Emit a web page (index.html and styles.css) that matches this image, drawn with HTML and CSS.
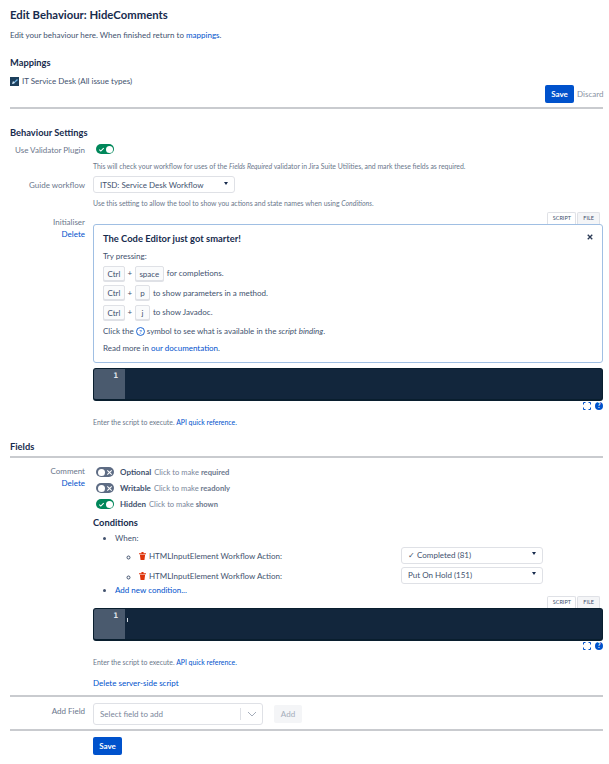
FILE: index.html
```html
<!DOCTYPE html>
<html lang="en">
<head>
<meta charset="utf-8">
<title>Edit Behaviour</title>
<link rel="stylesheet" href="styles.css">
</head>
<body>
<main class="page">
  <h1 class="title">Edit Behaviour: HideComments</h1>
  <p class="intro">Edit your behaviour here. When finished return to <a href="#">mappings</a>.</p>
  <h2 class="heading mappings-heading">Mappings</h2>
  <div class="mapping">
    <svg class="project-icon" viewBox="0 0 9 9" width="9" height="9"><rect width="9" height="9" fill="#1d3f5c"/><path d="M2 7 L7 2 L8 3 L4 6.5 Z" fill="#6fb3e8"/><path d="M2 7l1-3 2 2z" fill="#d7e9f7"/></svg>
    <span>IT Service Desk (All issue types)</span>
  </div>
  <div class="actions">
    <button class="btn-primary">Save</button>
    <span class="discard">Discard</span>
  </div>
  <hr class="rule">

  <h2 class="heading settings-heading">Behaviour Settings</h2>
  <div class="row row-validator">
    <div class="label">Use Validator Plugin</div>
    <div class="content">
      <span class="toggle on"><svg class="mark" viewBox="0 0 8 8" width="8" height="8"><path d="M1.5 4.2 3.2 5.8 6.5 2.4" fill="none" stroke="#fff" stroke-width="1.2"/></svg><i class="knob"></i></span>
      <p class="help help-validator">This will check your workflow for uses of the <em>Fields Required</em> validator in Jira Suite Utilities, and mark these fields as required.</p>
    </div>
  </div>
  <div class="row row-guide">
    <div class="label">Guide workflow</div>
    <div class="content">
      <div class="select select-guide"><span>ITSD: Service Desk Workflow</span><i class="caret"></i></div>
      <p class="help help-guide">Use this setting to allow the tool to show you actions and state names when using <em>Conditions</em>.</p>
    </div>
  </div>
  <div class="row row-init">
    <div class="label">Initialiser<a class="label-link" href="#">Delete</a></div>
    <div class="content">
      <div class="tabs"><span class="tab active">SCRIPT</span><span class="tab">FILE</span></div>
      <div class="notice">
        <svg class="close" viewBox="0 0 8 8" width="6" height="6"><path d="M1 1 7 7M7 1 1 7" stroke="#2b3a55" stroke-width="1.8"/></svg>
        <h3 class="notice-title">The Code Editor just got smarter!</h3>
        <p class="notice-line try">Try pressing:</p>
        <p class="keys"><kbd>Ctrl</kbd><b>+</b><kbd>space</kbd><span>for completions.</span></p>
        <p class="keys"><kbd>Ctrl</kbd><b>+</b><kbd>p</kbd><span>to show parameters in a method.</span></p>
        <p class="keys"><kbd>Ctrl</kbd><b>+</b><kbd>j</kbd><span>to show Javadoc.</span></p>
        <p class="notice-line click">Click the <svg class="qmark" viewBox="0 0 10 10" width="9" height="9"><circle cx="5" cy="5" r="4.4" fill="none" stroke="#0052cc" stroke-width="1"/><text x="5" y="7.6" text-anchor="middle" font-size="7" fill="#0052cc">?</text></svg> symbol to see what is available in the <em>script binding</em>.</p>
        <p class="notice-line more">Read more in <a href="#">our documentation</a>.</p>
      </div>
      <div class="editor"><div class="gutter">1</div><div class="code"></div></div>
      <div class="editor-tools">
        <svg viewBox="0 0 8 8" width="8" height="8"><path d="M.5 2.5v-2h2M5.5.5h2v2M7.5 5.5v2h-2M2.5 7.5h-2v-2" fill="none" stroke="#0052cc" stroke-width="1"/></svg>
        <svg viewBox="0 0 8 8" width="8" height="8"><circle cx="4" cy="4" r="4" fill="#0052cc"/><text x="4" y="6.4" text-anchor="middle" font-size="6.5" font-weight="700" fill="#fff">?</text></svg>
      </div>
      <p class="help help-script">Enter the script to execute. <a href="#">API quick reference.</a></p>
    </div>
  </div>

  <h2 class="heading fields-heading">Fields</h2>
  <hr class="rule rule-fields">
  <div class="row row-comment">
    <div class="label">Comment<a class="label-link" href="#">Delete</a></div>
    <div class="content">
      <div class="state"><span class="toggle off"><i class="knob"></i><svg class="mark" viewBox="0 0 8 8" width="8" height="8"><path d="M1.5 1.5 6.5 6.5M6.5 1.5 1.5 6.5" stroke="#fff" stroke-width="1.2"/></svg></span><strong>Optional</strong><span class="hint">Click to make <b>required</b></span></div>
      <div class="state"><span class="toggle off"><i class="knob"></i><svg class="mark" viewBox="0 0 8 8" width="8" height="8"><path d="M1.5 1.5 6.5 6.5M6.5 1.5 1.5 6.5" stroke="#fff" stroke-width="1.2"/></svg></span><strong>Writable</strong><span class="hint">Click to make <b>readonly</b></span></div>
      <div class="state"><span class="toggle on"><svg class="mark" viewBox="0 0 8 8" width="8" height="8"><path d="M1.5 4.2 3.2 5.8 6.5 2.4" fill="none" stroke="#fff" stroke-width="1.2"/></svg><i class="knob"></i></span><strong>Hidden</strong><span class="hint">Click to make <b>shown</b></span></div>
      <h3 class="conditions-heading">Conditions</h3>
      <ul class="conditions">
        <li class="when">When:
          <ul class="sub">
            <li class="cond">
              <div class="cond-row"><span class="cond-label"><svg class="trash" viewBox="0 0 8 9" width="7" height="8"><path d="M0 1.4h8v1.2H0zM2.8 0h2.4v1.4H2.8zM1 3.2h6L6.2 9H1.8z" fill="#de350b"/></svg>HTMLInputElement Workflow Action:</span>
              <div class="select select-cond"><span>✓ Completed (81)</span><i class="caret"></i></div></div>
            </li>
            <li class="cond">
              <div class="cond-row"><span class="cond-label"><svg class="trash" viewBox="0 0 8 9" width="7" height="8"><path d="M0 1.4h8v1.2H0zM2.8 0h2.4v1.4H2.8zM1 3.2h6L6.2 9H1.8z" fill="#de350b"/></svg>HTMLInputElement Workflow Action:</span>
              <div class="select select-cond"><span>Put On Hold (151)</span><i class="caret"></i></div></div>
            </li>
          </ul>
        </li>
        <li class="add-cond"><a href="#">Add new condition...</a></li>
      </ul>
      <div class="tabs tabs-second"><span class="tab active">SCRIPT</span><span class="tab">FILE</span></div>
      <div class="editor"><div class="gutter">1</div><div class="code"><i class="cursor"></i></div></div>
      <div class="editor-tools">
        <svg viewBox="0 0 8 8" width="8" height="8"><path d="M.5 2.5v-2h2M5.5.5h2v2M7.5 5.5v2h-2M2.5 7.5h-2v-2" fill="none" stroke="#0052cc" stroke-width="1"/></svg>
        <svg viewBox="0 0 8 8" width="8" height="8"><circle cx="4" cy="4" r="4" fill="#0052cc"/><text x="4" y="6.4" text-anchor="middle" font-size="6.5" font-weight="700" fill="#fff">?</text></svg>
      </div>
      <p class="help help-script">Enter the script to execute. <a href="#">API quick reference.</a></p>
      <a class="delete-script" href="#">Delete server-side script</a>
    </div>
  </div>
  <hr class="rule rule-add">
  <div class="row row-add">
    <div class="label">Add Field</div>
    <div class="content add-content">
      <div class="field-select"><span class="placeholder">Select field to add</span><i class="sep"></i><svg viewBox="0 0 10 6" width="10" height="6"><path d="M1 1l4 4 4-4" fill="none" stroke="#a5adba" stroke-width="1"/></svg></div>
      <button class="btn-disabled">Add</button>
    </div>
  </div>
  <hr class="rule rule-bottom">
  <div class="row">
    <div class="label"></div>
    <div class="content"><button class="btn-primary">Save</button></div>
  </div>
</main>
</body>
</html>
```
FILE: styles.css
```css
* { box-sizing: border-box; }
html, body { margin: 0; padding: 0; background: #fff; }
body { font-family: Lato, Roboto, sans-serif; font-size: 8px; line-height: 12px; color: #42526e; }
a { color: #0052cc; text-decoration: none; }
p, h1, h2, h3, ul { margin: 0; padding: 0; }
.page { width: 609px; padding: 8px 6px 0 10px; }
.title { font-size: 11.3px; line-height: 14px; font-weight: 700; color: #172b4d; }
.intro { margin-top: 7px; height: 12px; }
.heading { font-size: 9.3px; line-height: 13px; font-weight: 700; color: #172b4d; }
.mappings-heading { margin-top: 15px; }
.mapping { display: flex; align-items: center; gap: 3px; margin-top: 6px; height: 12px; }
.actions { display: flex; justify-content: flex-end; align-items: center; gap: 3px; margin-top: -2px; height: 18px; }
.btn-primary { width: 29px; height: 18px; padding: 0; border: 0; border-radius: 2px; background: #0052cc; color: #fff; font: 700 8px/18px Lato, sans-serif; }
.discard { color: #8993a4; width: 26px; }
.rule { height: 2px; margin: 0; border: 0; background: #c9cbcf; }
.actions + .rule { margin-top: 4px; }
.settings-heading { margin-top: 17px; }
.row { display: flex; }
.label { width: 75px; margin-right: 8px; flex: none; text-align: right; color: #6b778c; white-space: nowrap; }
.label-link { display: block; color: #0052cc; }
.content { flex: 1; min-width: 0; }
.row-validator { margin-top: 5px; }
.row-validator .toggle { margin-left: 3px; }
.toggle { display: flex; align-items: center; justify-content: space-between; width: 18px; height: 10px; padding: 0 1.5px; border-radius: 5px; flex: none; }
.toggle.on { background: #00875a; }
.toggle.off { background: #5e6c84; }
.knob { width: 7px; height: 7px; border-radius: 50%; background: #fff; }
.mark { width: 7px; height: 7px; }
.help { color: #6b778c; font-size: 6.9px; line-height: 10px; }
.help-validator { margin-top: 7px; }
.row-guide { margin-top: 5px; }
.row-guide .label { padding-top: 3px; }
.select { display: flex; align-items: center; justify-content: space-between; height: 17px; padding: 0 6px; background: #fff; border: 1px solid #dfe1e6; border-radius: 3px; color: #42526e; }
.select-guide { width: 142px; }
.caret { width: 0; height: 0; border-left: 2.5px solid transparent; border-right: 2.5px solid transparent; border-top: 3px solid #172b4d; margin-top: -3px; }
.help-guide { margin-top: 5px; }
.row-init { margin-top: 4px; }
.row-init .label { padding-top: 4px; }
.tabs { display: flex; justify-content: flex-end; gap: 1px; padding-right: 3px; height: 12px; }
.tab { height: 12px; padding: 0 5px; border: 1px solid #dfe1e6; border-bottom: 0; border-radius: 2px 2px 0 0; background: #f4f5f7; color: #42526e; font-size: 5.5px; line-height: 11px; }
.tab.active { background: #fff; width: 29px; text-align: center; padding: 0; }
.notice { position: relative; height: 139px; padding: 7px 9px; border: 1px solid #a0bfe3; border-radius: 3px; }
.close { position: absolute; top: 9px; right: 9px; }
.notice-title { font-size: 9.4px; line-height: 13px; font-weight: 700; color: #172b4d; }
.notice-line { line-height: 12px; }
.try { margin-top: 5px; }
.keys { display: flex; align-items: center; height: 16px; margin-top: 3.5px; }
.try + .keys { margin-top: 3px; }
.keys b { width: 10px; text-align: center; font-weight: 400; }
.keys span { margin-left: 3px; }
kbd { display: inline-block; height: 15px; min-width: 15px; padding: 0 3.5px; border: 1px solid #dfe1e6; border-radius: 2px; font: 8px/14px Lato, sans-serif; text-align: center; box-shadow: 0 1px 0 #dfe1e6; background: #fafbfc; }
.click { margin-top: 5px; }
.qmark { vertical-align: -2px; }
.more { margin-top: 5px; }
.editor { display: flex; height: 33px; margin-top: 5px; border: 1px solid #091e2e; border-bottom-width: 2px; border-radius: 3px; overflow: hidden; background: #12263c; }
.gutter { width: 31px; padding: 1px 7px 0 0; text-align: right; font: 700 7.5px/12px "DejaVu Sans Mono", monospace; color: #e4e8ee; background: #4a5a6e; }
.code { flex: 1; position: relative; }
.cursor { position: absolute; left: 2px; top: 9px; width: 1px; height: 4px; background: #cfd6de; }
.editor-tools { display: flex; justify-content: flex-end; gap: 4px; height: 9px; margin-top: 0; align-items: center; }
.help-script { margin-top: 7px; }
.fields-heading { margin-top: 13px; }
.rule-fields { margin-top: 3px; }
.row-comment { margin-top: 6px; }
.row-comment .label { padding-top: 1px; }
.state { display: flex; align-items: center; height: 16px; margin-left: 3px; }
.state strong { margin-left: 6px; font-weight: 700; }
.hint { margin-left: 3px; color: #7a869a; font-size: 7.6px; }
.hint b { color: #6b778c; font-weight: 700; }
.conditions-heading { margin-top: 4px; font-size: 9.3px; line-height: 13px; font-weight: 700; color: #172b4d; }
.conditions { list-style: disc; padding-left: 22px; margin-top: 3px; }
.when { line-height: 12px; }
.sub { list-style: circle; padding-left: 24px; margin-top: 1px; }
.cond { height: 20px; }
.cond-row { display: flex; align-items: center; height: 20px; }
.cond-label { display: flex; align-items: center; gap: 3px; width: 262px; flex: none; padding-top: 2px; }
.select-cond { width: 142px; height: 17px; }
.trash { flex: none; }
.add-cond { margin-top: -1px; }
.tabs-second { margin-top: 0; }
.tabs-second + .editor { margin-top: 0; }
.delete-script { display: block; margin-top: 10px; }
.rule-add { margin-top: 6px; }
.row-add { margin-top: 6px; }
.row-add .label { padding-top: 2px; }
.add-content { display: flex; align-items: center; gap: 11px; }
.field-select { display: flex; align-items: center; width: 170px; height: 22px; padding: 0 5px 0 6px; border: 1px solid #dfe1e6; border-radius: 3px; }
.placeholder { flex: 1; color: #7a869a; }
.sep { width: 1px; height: 12px; background: #dfe1e6; margin-right: 6px; }
.btn-disabled { width: 28px; height: 18px; padding: 0; border: 0; border-radius: 2px; background: #f4f5f7; color: #a5adba; font: 8px/18px Lato, sans-serif; }
.rule-bottom { margin-top: 4px; margin-bottom: 6px; }
```
